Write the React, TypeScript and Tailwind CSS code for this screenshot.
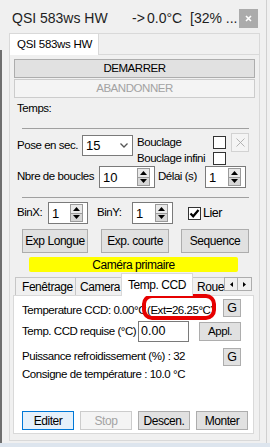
import React from "react";

const FONT = "font-['Liberation_Sans',Arial,sans-serif]";

type BtnProps = {
  className?: string;
  children: React.ReactNode;
  disabled?: boolean;
  focused?: boolean;
};

function Btn({ className = "", children, disabled, focused }: BtnProps) {
  const tone = disabled
    ? "bg-[#f4f4f4] border-[#cccccc] text-[#a3a3a3]"
    : focused
    ? "bg-[#e5f1fb] border-[#0078d7] text-black"
    : "bg-[#e1e1e1] border-[#adadad] text-black";
  return (
    <div
      className={`flex items-center justify-center border leading-none whitespace-nowrap ${tone} ${className}`}
    >
      {children}
    </div>
  );
}

function Spin() {
  return (
    <div className="flex flex-col w-[13px] h-full py-px">
      <div className="flex-1 flex items-center justify-center border border-[#9a9a9a] bg-[#e9e9e9]">
        <svg width="7" height="4" viewBox="0 0 7 4">
          <path d="M0 4 L3.5 0 L7 4 Z" fill="#000" />
        </svg>
      </div>
      <div className="flex-1 flex items-center justify-center border border-t-0 border-[#9a9a9a] bg-[#d6d6d6]">
        <svg width="7" height="4" viewBox="0 0 7 4">
          <path d="M0 0 L7 0 L3.5 4 Z" fill="#000" />
        </svg>
      </div>
    </div>
  );
}

function NumBox({ value, className = "" }: { value: string; className?: string }) {
  return (
    <div
      className={`flex items-stretch border border-[#7a7a7a] bg-white h-[22px] pl-[3px] pr-[4px] ${className}`}
    >
      <span className="flex-1 flex items-center text-[13px] tracking-normal leading-none">{value}</span>
      <Spin />
    </div>
  );
}

function Check({ checked }: { checked?: boolean }) {
  return (
    <div className="w-[13px] h-[13px] border border-[#333333] bg-white flex items-center justify-center shrink-0">
      {checked && (
        <svg width="11" height="11" viewBox="0 0 11 11">
          <path d="M1.5 5.5 L4.2 8.3 L9.5 2" stroke="#000" strokeWidth="2.2" fill="none" />
        </svg>
      )}
    </div>
  );
}

function Tab({ className = "", children }: { className?: string; children: React.ReactNode }) {
  return (
    <div
      className={`h-[18px] bg-[#f0f0f0] border-[#c6c6c6] flex items-center whitespace-nowrap overflow-hidden leading-none ${className}`}
    >
      {children}
    </div>
  );
}

export default function App() {
  return (
    <div
      className={`w-[270px] h-[447px] bg-[#f0f0f0] flex flex-col overflow-hidden text-black text-[11.5px] tracking-[-0.45px] whitespace-nowrap ${FONT}`}
    >
      <div className="flex h-[443px]">
        {/* bord gauche */}
        <div className="w-[2px] flex flex-col">
          <div className="h-[50px]" />
          <div className="flex-1 bg-[#6e6e6e]" />
        </div>

        <div className="w-[264px] flex flex-col">
          {/* barre de titre */}
          <div className="h-[33px] flex items-start justify-between pr-[8px]">
            <div className="pt-[10px] pl-[10px] flex text-[14px] leading-[16px] tracking-normal text-[#1e1e1e]">
              <span className="w-[120px]">QSI 583ws HW</span>
              <span className="w-[15px]">-&gt;</span>
              <span className="w-[43px]">0.0°C</span>
              <span>[32% ...</span>
            </div>
            <div className="mt-[9px] w-[19px] h-[19px] bg-[#ababab] flex items-center justify-center">
              <svg width="7" height="7" viewBox="0 0 7 7">
                <path d="M1 1 L6 6 M6 1 L1 6" stroke="#fff" strokeWidth="1.6" />
              </svg>
            </div>
          </div>

          {/* cadre principal */}
          <div className="ml-[7px] w-[251px] h-[408px] border border-[#d9d9d9] flex flex-col">
            <div className="flex h-[21px]">
              <div className="w-[89px] h-[21px] bg-white border-r border-[#d9d9d9] flex items-center pl-[7px] leading-none tracking-[-0.3px]">
                QSI 583ws HW
              </div>
              <div className="flex-1 border-b border-[#d9d9d9]" />
            </div>

            <div className="flex flex-col flex-1">
              <Btn className="ml-[4px] mt-[4px] w-[241px] h-[19px]">DEMARRER</Btn>
              <Btn disabled className="ml-[4px] mt-[1px] w-[241px] h-[19px]">
                ABANDONNER
              </Btn>
              <div className="mt-[2px] pl-[7px] h-[16px] leading-[16px]">Temps:</div>
              <div className="ml-[12px] mt-[12px] w-[227px] h-px bg-[#a0a0a0]" />

              {/* pose / bouclage */}
              <div className="mt-[4px] flex items-start">
                <div className="mt-[2px] pl-[7px] h-[21px] flex items-center">
                  <span className="w-[65px] leading-none">Pose en sec.</span>
                  <div className="w-[51px] h-[21px] border border-[#7a7a7a] bg-white flex items-center pl-[3px] pr-[4px]">
                    <span className="flex-1 text-[13px] tracking-normal leading-none">15</span>
                    <svg width="8" height="5" viewBox="0 0 8 5">
                      <path d="M0.5 0.5 L4 4 L7.5 0.5" stroke="#555" strokeWidth="1.3" fill="none" />
                    </svg>
                  </div>
                </div>
                <div className="ml-[4px] flex flex-col">
                  <div className="h-[19px] flex items-center">
                    <span className="w-[76px] leading-none">Bouclage</span>
                    <Check />
                    <div className="ml-[5px] w-[18px] h-[19px] bg-[#f4f4f4] border border-[#d2d2d2] flex items-center justify-center">
                      <svg width="9" height="9" viewBox="0 0 9 9">
                        <path d="M0.5 0.5 L8.5 8.5 M8.5 0.5 L0.5 8.5" stroke="#ababab" strokeWidth="0.9" />
                      </svg>
                    </div>
                  </div>
                  <div className="h-[14px] flex items-start">
                    <span className="w-[76px] leading-[13px]">Bouclage infini</span>
                    <Check />
                  </div>
                </div>
              </div>

              {/* boucles / délai */}
              <div className="pl-[7px] flex items-center h-[22px]">
                <span className="w-[82px] leading-none">Nbre de boucles</span>
                <NumBox value="10" className="w-[56px]" />
                <span className="ml-[3px] w-[47px] leading-none">Délai (s)</span>
                <NumBox value="1" className="w-[41px]" />
              </div>

              <div className="ml-[12px] mt-[9px] w-[227px] h-px bg-[#a0a0a0]" />

              {/* binning */}
              <div className="mt-[4px] pl-[7px] flex items-center h-[22px]">
                <span className="w-[31px] leading-none">BinX:</span>
                <NumBox value="1" className="w-[40px]" />
                <span className="ml-[9px] w-[35px] leading-none">BinY:</span>
                <NumBox value="1" className="w-[41px]" />
                <div className="ml-[15px]">
                  <Check checked />
                </div>
                <span className="ml-[2px] text-[12.5px] leading-none">Lier</span>
              </div>

              {/* expositions */}
              <div className="mt-[5px] pl-[12px] flex">
                <Btn className="w-[66px] h-[24px] text-[12px]">Exp Longue</Btn>
                <Btn className="ml-[13px] w-[68px] h-[24px] text-[12px]">Exp. courte</Btn>
                <Btn className="ml-[12px] w-[68px] h-[24px] text-[12px]">Sequence</Btn>
              </div>

              <div className="mt-[4px] ml-[19px] w-[209px] h-[15px] bg-[#ffff00] rounded-[2px] flex items-center justify-center leading-none text-[12px]">
                Caméra primaire
              </div>

              {/* onglets du bas */}
              <div className="mt-[1px] ml-[3px] w-[241px] flex flex-col">
                <div className="h-[22px] flex items-end">
                  <Tab className="ml-[2px] w-[61px] border-l border-t border-r pl-[6px] text-[12px]">Fenêtrage</Tab>
                  <Tab className="w-[45px] border-t pl-[4px] text-[12px]">Camera</Tab>
                  <div className="relative z-10 -mb-px w-[72px] h-[23px] bg-white border-l border-t border-r border-[#d9d9d9] flex items-center justify-center leading-none text-[12px]">
                    Temp. CCD
                  </div>
                  <Tab className="w-[31px] border-t pl-[4px] text-[12px]">Roue</Tab>
                  <div className="self-start mt-[4px] flex">
                    <div className="w-[14px] h-[14px] border border-[#adadad] bg-[#f0f0f0] flex items-center justify-center">
                      <svg width="3" height="5" viewBox="0 0 3 5">
                        <path d="M3 0 L0 2.5 L3 5 Z" fill="#000" />
                      </svg>
                    </div>
                    <div className="w-[14px] h-[14px] border border-l-0 border-[#adadad] bg-[#f0f0f0] flex items-center justify-center">
                      <svg width="3" height="5" viewBox="0 0 3 5">
                        <path d="M0 0 L3 2.5 L0 5 Z" fill="#000" />
                      </svg>
                    </div>
                  </div>
                </div>

                <div className="h-[139px] border border-[#d9d9d9] bg-white flex flex-col pt-[3px]">
                  <div className="pl-[8px] h-[18px] flex items-start">
                    <span className="w-[125px] pt-[2px] leading-[18px] overflow-hidden">
                      Temperature CCD: 0.00°C
                    </span>
                    <span className="relative w-[64px] h-[18px] pt-[2px] leading-[18px] bg-white">
                      (Ext=26.25°C)
                      <span className="absolute -left-[5px] -right-[5px] -top-[5px] -bottom-[3px] border-[4px] border-[#e60000] rounded-[10px]" />
                    </span>
                    <Btn className="ml-[12px] w-[18px] h-[18px] text-[12.5px]">G</Btn>
                  </div>

                  <div className="mt-[4px] pl-[8px] h-[21px] flex items-center">
                    <span className="w-[116px] leading-none">Temp. CCD requise (°C)</span>
                    <div className="w-[51px] h-[21px] border border-[#7a7a7a] bg-white flex items-center pl-[2px] text-[12.5px] tracking-normal leading-none">
                      0.00
                    </div>
                    <Btn className="ml-[10px] w-[42px] h-[19px]">Appl.</Btn>
                  </div>

                  <div className="mt-[6px] pl-[8px] h-[18px] flex items-center">
                    <span className="w-[201px] leading-none">Puissance refroidissement (%) : 32</span>
                    <Btn className="w-[18px] h-[18px] text-[12.5px]">G</Btn>
                  </div>

                  <div className="pl-[8px] h-[18px] flex items-center leading-none">
                    Consigne de température : 10.0 °C
                  </div>

                  <div className="mt-[27px] pl-[8px] flex gap-[6px]">
                    <Btn focused className="w-[52px] h-[19px] text-[12px]">Editer</Btn>
                    <Btn disabled className="w-[52px] h-[19px] text-[12px]">Stop</Btn>
                    <Btn className="w-[52px] h-[19px] text-[12px]">Descen.</Btn>
                    <Btn className="w-[52px] h-[19px] text-[12px]">Monter</Btn>
                  </div>
                </div>
              </div>
            </div>
          </div>
        </div>

        {/* bord droit */}
        <div className="w-[4px] border-l border-[#d0d0d0]" />
      </div>
      <div className="h-[4px] bg-[#dde5ee]" />
    </div>
  );
}
